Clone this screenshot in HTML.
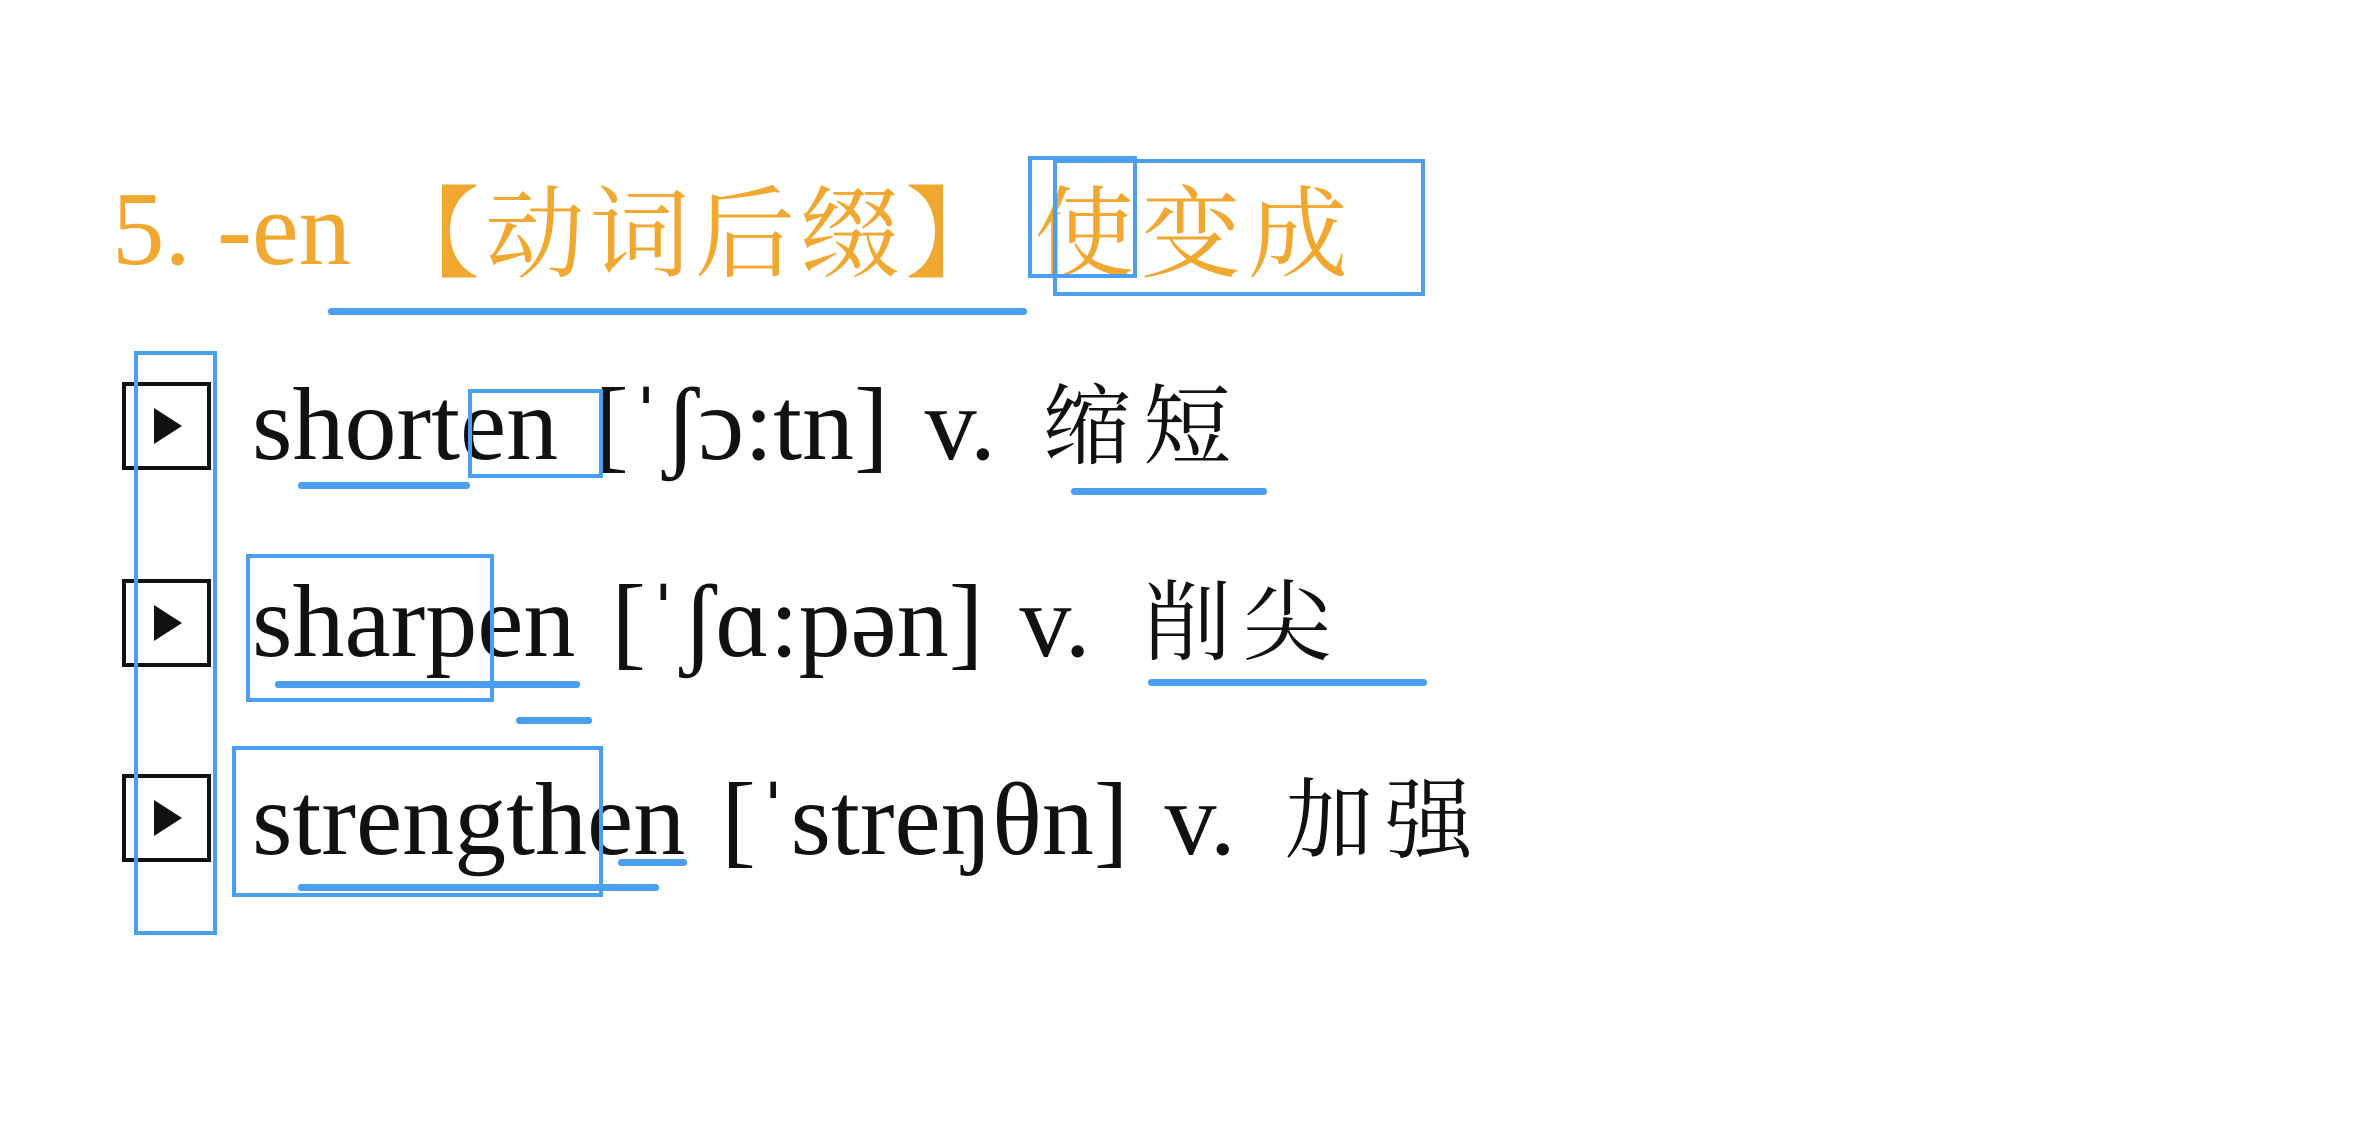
<!DOCTYPE html>
<html><head><meta charset="utf-8"><style>
body{margin:0;width:2380px;height:1130px;background:#fff;position:relative;overflow:hidden}
.t{position:absolute;white-space:nowrap;line-height:1}
.en{font-family:"Liberation Serif","Noto Serif CJK SC",serif;color:#111;font-size:104px;word-spacing:10px}
.zh{font-family:"Noto Serif CJK SC","Noto Sans CJK SC",serif;color:#111;font-size:88px;letter-spacing:12px}
.ti{color:#f0a830;font-family:"Liberation Serif","Noto Serif CJK SC",serif;font-size:100px}
.b{position:absolute;border:4px solid #4a9ff0;box-sizing:border-box}
.l{position:absolute;height:7px;background:#4a9ff0;border-radius:3px}
.p{position:absolute;border:4px solid #111;box-sizing:border-box;width:89px;height:88px}
.p:after{content:"";position:absolute;left:28px;top:22px;border-left:28px solid #111;border-top:18px solid transparent;border-bottom:18px solid transparent}
</style></head><body>
<div class="t ti" style="left:112px;top:176px;font-size:105px">5. -en</div>
<div class="t ti" style="left:380px;top:176px;font-family:'Noto Serif CJK SC',serif;letter-spacing:5px">【动词后缀】</div>
<div class="t ti" style="left:1034px;top:176px;font-family:'Noto Serif CJK SC',serif;letter-spacing:7px">使变成</div>

<div class="t en" style="left:252px;top:373px">shorten [ˈʃɔ:tn] v.</div>
<div class="t zh" style="left:1043px;top:376px">缩短</div>
<div class="t en" style="left:252px;top:570px">sharpen [ˈʃɑ:pən] v.</div>
<div class="t zh" style="left:1143px;top:572px">削尖</div>
<div class="t en" style="left:252px;top:768px">strengthen [ˈstreŋθn] v.</div>
<div class="t zh" style="left:1285px;top:770px">加强</div>

<div class="p" style="left:122px;top:382px"></div>
<div class="p" style="left:122px;top:579px"></div>
<div class="p" style="left:122px;top:774px"></div>

<div class="b" style="left:1028px;top:156px;width:109px;height:122px"></div>
<div class="b" style="left:1053px;top:159px;width:372px;height:137px"></div>
<div class="l" style="left:328px;top:308px;width:699px"></div>
<div class="b" style="left:134px;top:351px;width:83px;height:584px"></div>
<div class="b" style="left:468px;top:389px;width:135px;height:89px"></div>
<div class="l" style="left:298px;top:482px;width:172px"></div>
<div class="l" style="left:1071px;top:488px;width:196px"></div>
<div class="b" style="left:246px;top:554px;width:248px;height:148px"></div>
<div class="l" style="left:275px;top:681px;width:305px"></div>
<div class="l" style="left:516px;top:717px;width:76px"></div>
<div class="l" style="left:1148px;top:679px;width:279px"></div>
<div class="b" style="left:232px;top:746px;width:371px;height:151px"></div>
<div class="l" style="left:298px;top:884px;width:361px"></div>
<div class="l" style="left:618px;top:859px;width:69px"></div>
</body></html>
